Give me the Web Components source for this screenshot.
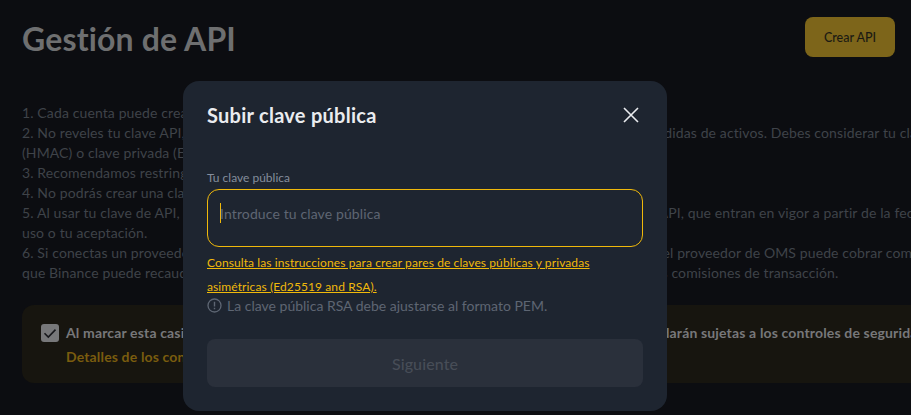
<!DOCTYPE html>
<html lang="es">
<head>
<meta charset="utf-8">
<title>Gestión de API</title>
<style>
    html, body { margin: 0; height: 100%; background: #0c0d11; overflow: hidden; }
    body { font-family: Lato, "Liberation Sans", sans-serif; }
</style>
</head>
<body>
<api-page>
    <page-header slot="header" title-text="Gestión de API" action="Crear API"></page-header>
    <api-notes slot="notes">
        <div>1. Cada cuenta puede crear hasta 30 claves de API.</div>
        <div>2. No reveles tu clave API, clave secreta (HMAC) o clave privada (Ed25519, RSA) a nadie para evitar pérdidas de activos. Debes considerar tu clave API y tu clave secreta</div>
        <div>(HMAC) o clave privada (Ed25519, RSA) como tus contraseñas.</div>
        <div>3. Recomendamos restringir el acceso solo a direcciones IP de confianza.</div>
        <div>4. No podrás crear una clave de API si no has completado la verificación KYC.</div>
        <div>5. Al usar tu clave de API, aceptas y te comprometes a cumplir las siguientes restricciones de uso de la API, que entran en vigor a partir de la fecha de</div>
        <div>uso o tu aceptación.</div>
        <div>6. Si conectas un proveedor de OMS, ten en cuenta que, además de las comisiones que cobra Binance, el proveedor de OMS puede cobrar comisiones</div>
        <div>que Binance puede recaudar en su nombre. Estas comisiones adicionales de tus planes se añadirán a tus comisiones de transacción.</div>
    </api-notes>
    <consent-box slot="consent" link="Detalles de los controles de seguridad">Al marcar esta casilla, aceptas que todas tus claves de API existentes y las que crees luego quedarán sujetas a los controles de seguridad predeterminados</consent-box>
</api-page>
<upload-modal></upload-modal>

<script>
class ApiPage extends HTMLElement {
    constructor() {
        super();
        this.attachShadow({ mode: "open" });
        this.shadowRoot.innerHTML = `
            <style>
                :host { display: block; width: 1500px; padding: 17px 0 0 22px; box-sizing: border-box; }
                #notes { display: block; margin-top: 46px; }
                #consent { display: block; margin-top: 22px; }
            </style>
            <slot name="header"></slot>
            <div id="notes"><slot name="notes"></slot></div>
            <div id="consent"><slot name="consent"></slot></div>
        `;
    }
}

class PageHeader extends HTMLElement {
    connectedCallback() {
        this.attachShadow({ mode: "open" });
        this.shadowRoot.innerHTML = `
            <style>
                :host { display: flex; width: 873px; height: 40px; justify-content: space-between; align-items: flex-start; }
                h1 { margin: 2px 0 0; font-size: 32px; font-weight: 700; line-height: 40px; letter-spacing: 0.15px; color: #6e6f70; }
                button { width: 90px; height: 40px; border: none; border-radius: 8px; padding: 1px 0 0; background: #7d651a; color: #1b1a13; font: 500 12.5px Lato, sans-serif; }
            </style>
            <h1>${this.getAttribute("title-text")}</h1>
            <button>${this.getAttribute("action")}</button>
        `;
    }
}

class ApiNotes extends HTMLElement {
    constructor() {
        super();
        this.attachShadow({ mode: "open" });
        this.shadowRoot.innerHTML = `
            <style>
                :host { display: block; font-size: 14px; line-height: 20px; letter-spacing: 0.12px; color: #3f4349; white-space: nowrap; }
            </style>
            <slot></slot>
        `;
    }
}

class ConsentBox extends HTMLElement {
    connectedCallback() {
        this.attachShadow({ mode: "open" });
        this.shadowRoot.innerHTML = `
            <style>
                :host { display: flex; gap: 7px; height: 78px; box-sizing: border-box; padding: 19px; border-radius: 12px; background: #17150f; white-space: nowrap; }
                .check { flex: none; width: 18px; height: 18px; border-radius: 3px; background: #77787a; display: flex; }
                .body { margin-top: -3px; font-size: 14px; line-height: 24px; font-weight: 700; letter-spacing: 0.15px; color: #77787a; }
                .link { color: #7a5c0e; }
            </style>
            <div class="check">
                <svg viewBox="0 0 18 18" width="18" height="18"><path d="M3.5 9.2l3.8 3.8 7.2-7.4" fill="none" stroke="#17181c" stroke-width="1.6"/></svg>
            </div>
            <div class="body">
                <div><slot></slot></div>
                <div class="link">${this.getAttribute("link")}</div>
            </div>
        `;
    }
}

class UploadModal extends HTMLElement {
    constructor() {
        super();
        this.attachShadow({ mode: "open" });
        this.shadowRoot.innerHTML = `
            <style>
                :host { position: absolute; top: 81px; left: 183px; width: 484px; height: 330px; box-sizing: border-box; padding: 0 24px; display: block; border-radius: 16px; background: #1e2530; }
                header { display: flex; height: 68px; justify-content: space-between; align-items: center; }
                h2 { margin: 0; font-size: 20px; font-weight: 700; line-height: 28px; letter-spacing: 0.27px; color: #eaecef; }
                .close { display: flex; margin-right: 4px; }
                label { display: block; margin-top: 21px; font-size: 12px; line-height: 16px; color: #848e9c; }
                .field { display: flex; align-items: flex-start; height: 58px; box-sizing: border-box; margin-top: 3px; padding: 13px 0 0 12px; border: 1px solid #f0b90b; border-radius: 12px; font-size: 14px; line-height: 20px; letter-spacing: 0.12px; color: #5e6673; }
                .field span:last-child { margin-top: 1px; }
                .caret { width: 1px; height: 20px; margin-right: -1px; background: #f0b90b; }
                .help { display: block; margin-top: 4px; font-size: 12px; line-height: 24px; letter-spacing: 0.1px; color: #f0b90b; text-decoration: underline; }
                .hint { display: flex; align-items: center; gap: 5px; height: 20px; margin-top: -4px; font-size: 14px; color: #5e6673; }
                .hint svg { flex: none; }
                button { display: block; width: 100%; height: 48px; margin-top: 24px; border: none; border-radius: 8px; background: #2a303b; color: #474d57; font: 500 16px Lato, sans-serif; letter-spacing: 0.1px; }
            </style>
            <header>
                <h2>Subir clave pública</h2>
                <span class="close">
                    <svg viewBox="0 0 16 16" width="16" height="16"><path d="M1 1l14 14M15 1L1 15" stroke="#eaecef" stroke-width="1.6" fill="none"/></svg>
                </span>
            </header>
            <label>Tu clave pública</label>
            <div class="field"><span class="caret"></span><span>Introduce tu clave pública</span></div>
            <a class="help">Consulta las instrucciones para crear pares de claves públicas y privadas<br>asimétricas (Ed25519 and RSA).</a>
            <div class="hint">
                <svg viewBox="0 0 15 15" width="15" height="15"><circle cx="7.5" cy="7.5" r="6.5" fill="none" stroke="#5e6673" stroke-width="1.3"/><path d="M7.5 3.8v4.6M7.5 9.8v1.5" stroke="#5e6673" stroke-width="1.4"/></svg>
                La clave pública RSA debe ajustarse al formato PEM.
            </div>
            <button disabled>Siguiente</button>
        `;
    }
}

customElements.define("api-page", ApiPage);
customElements.define("page-header", PageHeader);
customElements.define("api-notes", ApiNotes);
customElements.define("consent-box", ConsentBox);
customElements.define("upload-modal", UploadModal);
</script>
</body>
</html>
